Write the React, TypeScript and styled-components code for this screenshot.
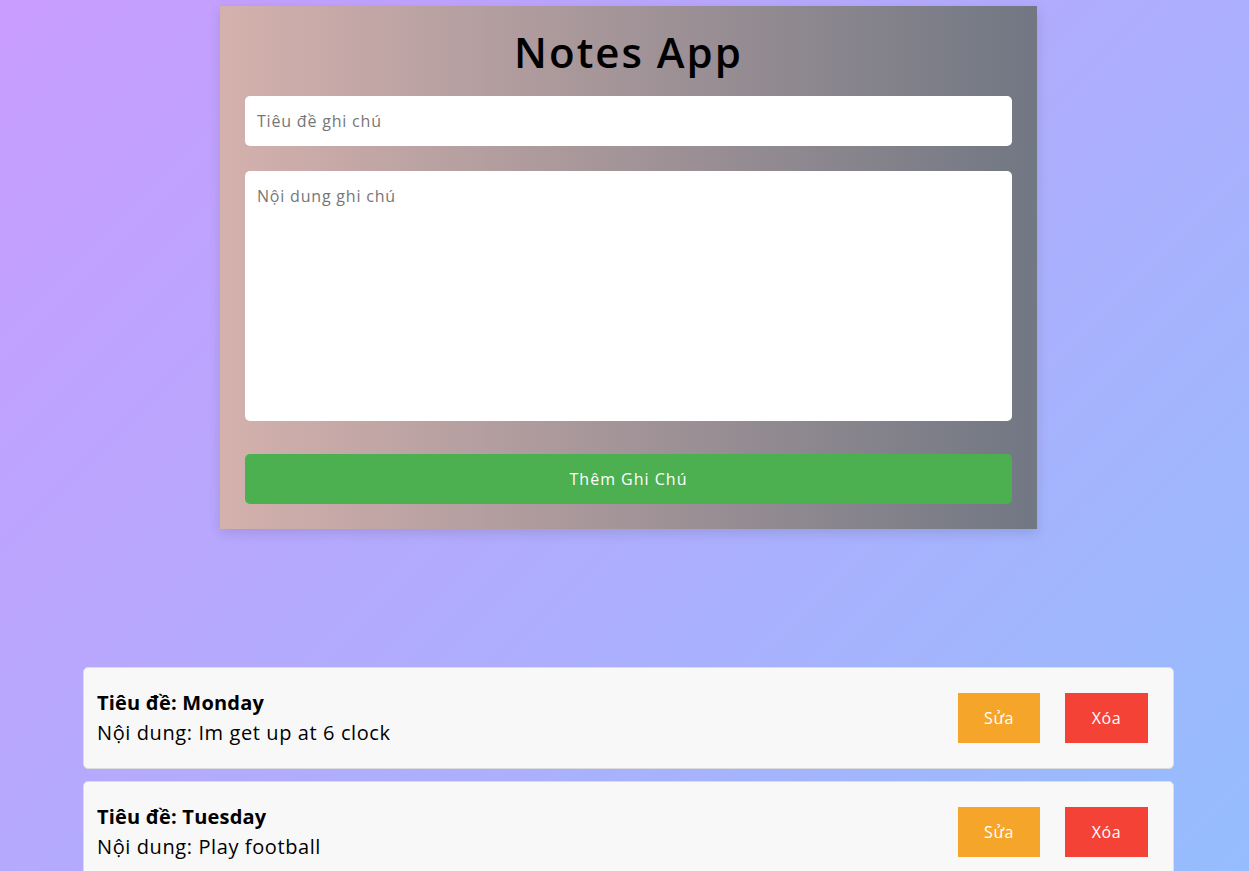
import React, { useState } from "react";
import styled, { createGlobalStyle } from "styled-components";

type Note = { id: number; title: string; content: string };

const GlobalStyle = createGlobalStyle`
  html, body {
    margin: 0;
    padding: 0;
    min-height: 100%;
  }
  body {
    font-family: "Open Sans", "Noto Sans", sans-serif;
    background: linear-gradient(135deg, #c99dff 0%, #b1acfd 50%, #95bdfe 100%);
    background-attachment: fixed;
    min-height: 100vh;
  }
`;

const Page = styled.main`
  padding: 6px 0 20px 8px;
  display: flex;
  flex-direction: column;
  align-items: center;
`;

const FormCard = styled.section`
  width: 817px;
  box-sizing: border-box;
  padding: 25px;
  padding-top: 18px;
  background: linear-gradient(to right, #d4b1ad, #717783);
  box-shadow: 0 4px 12px rgba(0, 0, 0, 0.12);
  display: flex;
  flex-direction: column;
`;

const Title = styled.h1`
  margin: 0 0 16px;
  text-align: center;
  font-size: 42px;
  line-height: 56px;
  font-weight: 600;
  letter-spacing: 2px;
  color: #000;
`;

const TextInput = styled.input`
  height: 50px;
  box-sizing: border-box;
  border: none;
  border-radius: 5px;
  padding: 0 12px;
  font-family: inherit;
  font-size: 16px;
  letter-spacing: 0.8px;
  outline: none;
  &::placeholder {
    color: #767676;
  }
`;

const TextArea = styled.textarea`
  height: 250px;
  margin-top: 25px;
  box-sizing: border-box;
  border: none;
  border-radius: 5px;
  padding: 14px 12px;
  font-family: inherit;
  font-size: 16px;
  letter-spacing: 0.8px;
  resize: none;
  outline: none;
  &::placeholder {
    color: #767676;
  }
`;

const AddButton = styled.button`
  margin-top: 33px;
  height: 50px;
  border: none;
  border-radius: 5px;
  background: #4caf50;
  color: #fff;
  font-family: inherit;
  font-size: 16px;
  font-weight: 500;
  letter-spacing: 1px;
  cursor: pointer;
`;

const NoteList = styled.ul`
  list-style: none;
  margin: 138px 0 0;
  padding: 0;
  width: 1091px;
  display: flex;
  flex-direction: column;
  gap: 12px;
`;

const NoteItem = styled.li`
  box-sizing: border-box;
  height: 102px;
  padding: 0 25px 0 13px;
  background: #f8f8f8;
  border: 1px solid #dddddd;
  border-radius: 5px;
  display: flex;
  align-items: center;
  justify-content: space-between;
`;

const NoteText = styled.div`
  display: flex;
  flex-direction: column;
  gap: 2px;
  font-size: 20px;
  line-height: 28px;
  letter-spacing: 0.6px;
  color: #000;
`;

const NoteTitle = styled.strong`
  font-weight: 700;
  letter-spacing: 0.2px;
`;

const Actions = styled.div`
  display: flex;
  gap: 25px;
`;

const ActionButton = styled.button<{ $variant: "edit" | "delete" }>`
  height: 50px;
  width: ${(p) => (p.$variant === "edit" ? "82px" : "83px")};
  padding: 0;
  border: none;
  background: ${(p) => (p.$variant === "edit" ? "#f5a62a" : "#f44336")};
  color: #fff;
  font-family: inherit;
  font-size: 16px;
  letter-spacing: 0.5px;
  cursor: pointer;
`;

const App = () => {
  const [title, setTitle] = useState("");
  const [content, setContent] = useState("");
  const [notes, setNotes] = useState<Note[]>([
    { id: 1, title: "Monday", content: "Im get up at 6 clock" },
    { id: 2, title: "Tuesday", content: "Play football" },
  ]);

  const addNote = () => {
    if (!title.trim()) return;
    setNotes((prev) => [...prev, { id: Date.now(), title, content }]);
    setTitle("");
    setContent("");
  };

  const removeNote = (id: number) => {
    setNotes((prev) => prev.filter((n) => n.id !== id));
  };

  return (
    <>
      <GlobalStyle />
      <Page>
        <FormCard>
          <Title>Notes App</Title>
          <TextInput
            placeholder="Tiêu đề ghi chú"
            value={title}
            onChange={(e) => setTitle(e.target.value)}
          />
          <TextArea
            placeholder="Nội dung ghi chú"
            value={content}
            onChange={(e) => setContent(e.target.value)}
          />
          <AddButton onClick={addNote}>Thêm Ghi Chú</AddButton>
        </FormCard>
        <NoteList>
          {notes.map((note) => (
            <NoteItem key={note.id}>
              <NoteText>
                <NoteTitle>Tiêu đề: {note.title}</NoteTitle>
                <span>Nội dung: {note.content}</span>
              </NoteText>
              <Actions>
                <ActionButton $variant="edit">Sửa</ActionButton>
                <ActionButton $variant="delete" onClick={() => removeNote(note.id)}>
                  Xóa
                </ActionButton>
              </Actions>
            </NoteItem>
          ))}
        </NoteList>
      </Page>
    </>
  );
};

export default App;
